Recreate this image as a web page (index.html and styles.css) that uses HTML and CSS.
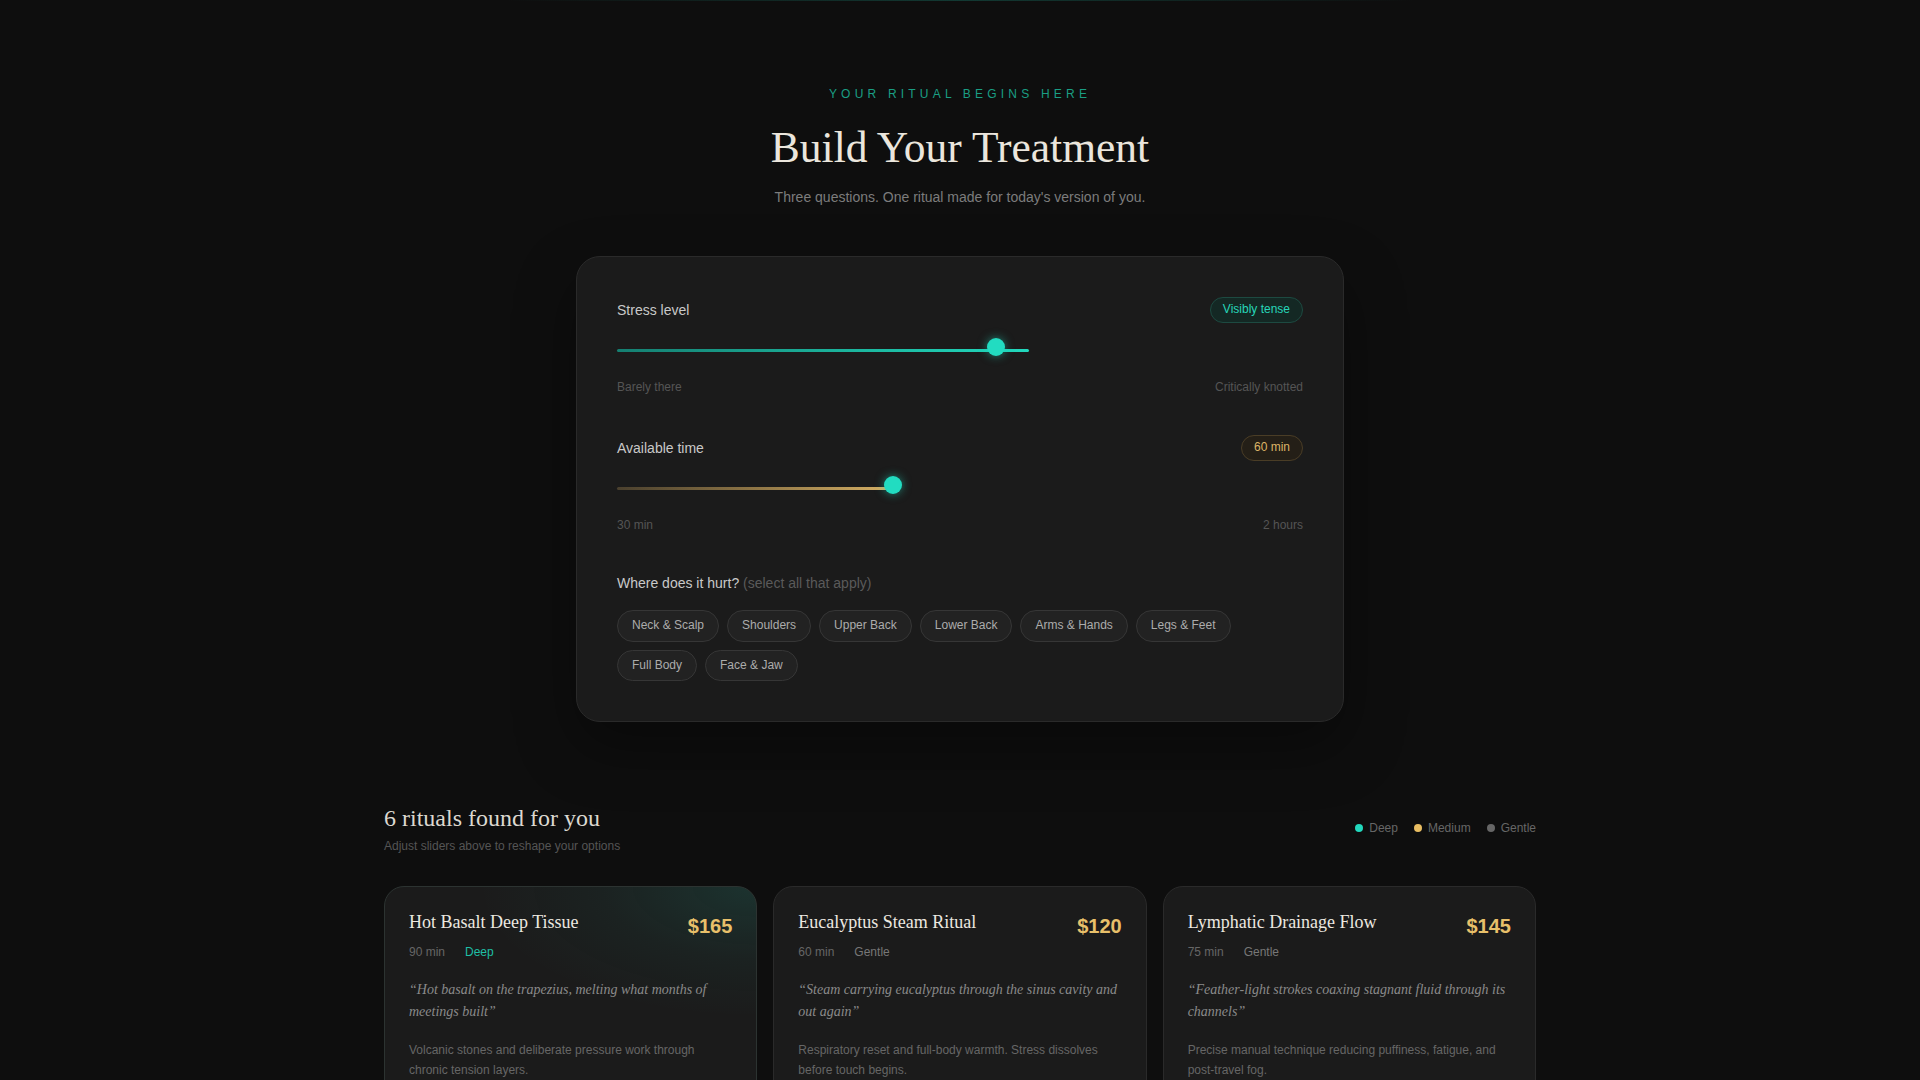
FILE: index.html
```html
<!DOCTYPE html>
<html lang="en">
<head>
<meta charset="utf-8">
<title>Build Your Treatment</title>
<link rel="stylesheet" href="styles.css">
</head>
<body>
<div class="topline"></div>
<main class="page">
  <header class="hero">
    <p class="eyebrow">YOUR RITUAL BEGINS HERE</p>
    <h1 class="hero-title">Build Your Treatment</h1>
    <p class="lede">Three questions. One ritual made for today's version of you.</p>
  </header>

  <section class="builder">
    <div class="field">
      <div class="field-head">
        <span class="field-label">Stress level</span>
        <span class="badge badge-teal">Visibly tense</span>
      </div>
      <div class="slider">
        <div class="track track-stress"></div>
        <div class="thumb" style="left: 55.3%"></div>
      </div>
      <div class="scale"><span>Barely there</span><span>Critically knotted</span></div>
    </div>

    <div class="field">
      <div class="field-head">
        <span class="field-label">Available time</span>
        <span class="badge badge-gold">60 min</span>
      </div>
      <div class="slider">
        <div class="track track-time" style="width: 40.3%"></div>
        <div class="thumb" style="left: 40.3%"></div>
      </div>
      <div class="scale"><span>30 min</span><span>2 hours</span></div>
    </div>

    <div class="field">
      <p class="question">Where does it hurt? <span class="hint">(select all that apply)</span></p>
      <div class="chips">
        <span class="chip">Neck &amp; Scalp</span>
        <span class="chip">Shoulders</span>
        <span class="chip">Upper Back</span>
        <span class="chip">Lower Back</span>
        <span class="chip">Arms &amp; Hands</span>
        <span class="chip">Legs &amp; Feet</span>
        <span class="chip">Full Body</span>
        <span class="chip">Face &amp; Jaw</span>
      </div>
    </div>
  </section>

  <section class="results">
    <div class="results-head">
      <div>
        <h2 class="results-title">6 rituals found for you</h2>
        <p class="results-sub">Adjust sliders above to reshape your options</p>
      </div>
      <div class="legend">
        <span class="legend-item"><span class="dot dot-deep"></span>Deep</span>
        <span class="legend-item"><span class="dot dot-medium"></span>Medium</span>
        <span class="legend-item"><span class="dot dot-gentle"></span>Gentle</span>
      </div>
    </div>

    <div class="grid">
      <article class="ritual ritual-featured">
        <div class="ritual-head">
          <div>
            <h3 class="ritual-title">Hot Basalt Deep Tissue</h3>
            <div class="meta"><span>90 min</span><span class="lvl-deep">Deep</span></div>
          </div>
          <span class="price">$165</span>
        </div>
        <p class="quote">“Hot basalt on the trapezius, melting what months of meetings built”</p>
        <p class="desc">Volcanic stones and deliberate pressure work through chronic tension layers.</p>
      </article>

      <article class="ritual">
        <div class="ritual-head">
          <div>
            <h3 class="ritual-title">Eucalyptus Steam Ritual</h3>
            <div class="meta"><span>60 min</span><span class="lvl-gentle">Gentle</span></div>
          </div>
          <span class="price">$120</span>
        </div>
        <p class="quote">“Steam carrying eucalyptus through the sinus cavity and out again”</p>
        <p class="desc">Respiratory reset and full-body warmth. Stress dissolves before touch begins.</p>
      </article>

      <article class="ritual">
        <div class="ritual-head">
          <div>
            <h3 class="ritual-title">Lymphatic Drainage Flow</h3>
            <div class="meta"><span>75 min</span><span class="lvl-gentle">Gentle</span></div>
          </div>
          <span class="price">$145</span>
        </div>
        <p class="quote">“Feather-light strokes coaxing stagnant fluid through its channels”</p>
        <p class="desc">Precise manual technique reducing puffiness, fatigue, and post-travel fog.</p>
      </article>

      <article class="ritual">
        <div class="ritual-head">
          <div>
            <h3 class="ritual-title">Shiatsu Pressure Map</h3>
            <div class="meta"><span>60 min</span><span class="lvl-medium">Medium</span></div>
          </div>
          <span class="price">$130</span>
        </div>
        <p class="quote">“Thumbs finding the exact point where the day got stuck”</p>
        <p class="desc">Meridian-based pressure sequence to release shoulders and lower back.</p>
      </article>

      <article class="ritual">
        <div class="ritual-head">
          <div>
            <h3 class="ritual-title">Cedar Scalp &amp; Neck Release</h3>
            <div class="meta"><span>45 min</span><span class="lvl-medium">Medium</span></div>
          </div>
          <span class="price">$95</span>
        </div>
        <p class="quote">“Warm cedar oil undoing the knot behind your left ear”</p>
        <p class="desc">Focused upper-body work for screen-bound necks and clenched jaws.</p>
      </article>

      <article class="ritual">
        <div class="ritual-head">
          <div>
            <h3 class="ritual-title">Full Body Reset</h3>
            <div class="meta"><span>120 min</span><span class="lvl-deep">Deep</span></div>
          </div>
          <span class="price">$210</span>
        </div>
        <p class="quote">“Two hours where nothing is asked of you”</p>
        <p class="desc">Head-to-toe restoration combining stones, stretching and steam.</p>
      </article>
    </div>
  </section>
</main>
</body>
</html>
```

FILE: styles.css
```css
* { box-sizing: border-box; }

html, body {
  margin: 0;
  background: #0e0e0e;
}

body {
  font-family: "Liberation Sans", Arial, sans-serif;
  color: #cfcfcf;
  position: relative;
}

.topline {
  position: absolute;
  top: 0;
  left: 50%;
  width: 912px;
  height: 1px;
  transform: translateX(-50%);
  background: linear-gradient(90deg, rgba(31, 209, 181, 0) 0%, rgba(31, 209, 181, 0.22) 50%, rgba(31, 209, 181, 0) 100%);
}

.page {
  width: 1152px;
  margin: 0 auto;
  padding: 85px 0 80px;
}

/* Hero */
.hero {
  text-align: center;
}

.eyebrow {
  margin: 0;
  font-size: 12px;
  line-height: 18px;
  letter-spacing: 0.35em;
  color: #1a9e84;
}

.hero-title {
  margin: 19px 0 0;
  font-family: "Liberation Serif", "Times New Roman", serif;
  font-weight: 400;
  font-size: 43.5px;
  line-height: 51px;
  color: #ebe6dd;
}

.lede {
  margin: 13px 0 0;
  font-size: 14px;
  line-height: 22.4px;
  color: #7c7c7c;
}

/* Builder card */
.builder {
  width: 768px;
  margin: 48px auto 0;
  padding: 40px;
  background: #1b1b1b;
  border: 1px solid #2a2a2a;
  border-radius: 24px;
  box-shadow: 0 24px 60px rgba(0, 0, 0, 0.35);
}

.field + .field {
  margin-top: 41.5px;
}

.field-head {
  display: flex;
  justify-content: space-between;
  align-items: center;
}

.field-label {
  font-size: 14px;
  color: #c9c9c9;
}

.badge {
  font-size: 12px;
  line-height: 13.4px;
  padding: 5px 12px;
  border-radius: 999px;
  border: 1px solid;
}

.badge-teal {
  color: #27d6b9;
  background: #142824;
  border-color: #1d4a41;
}

.badge-gold {
  color: #dcb467;
  background: #241f17;
  border-color: #4a3d26;
}

.slider {
  position: relative;
  height: 24px;
  margin-top: 12px;
}

.track {
  position: absolute;
  left: 0;
  top: 14px;
  height: 3px;
  border-radius: 2px;
}

.track-stress {
  width: 60%;
  background: linear-gradient(90deg, #157f71 0%, #1cb8a0 60%, #22d8bd 100%);
}

.track-time {
  background: linear-gradient(90deg, #4a402e 0%, #8f7646 50%, #d6b065 100%);
}

.thumb {
  position: absolute;
  top: 3px;
  width: 18px;
  height: 18px;
  margin-left: -9px;
  border-radius: 50%;
  background: #22dcc1;
  box-shadow: 0 0 10px rgba(34, 220, 193, 0.55);
}

.scale {
  display: flex;
  justify-content: space-between;
  margin-top: 21px;
  font-size: 12px;
  line-height: 14px;
  color: #555555;
}

.question {
  margin: 0;
  font-size: 14px;
  line-height: 20px;
  color: #c9c9c9;
}

.hint {
  color: #5a5a5a;
}

.chips {
  display: flex;
  flex-wrap: wrap;
  gap: 8px;
  margin-top: 17px;
}

.chip {
  font-size: 12px;
  line-height: 13.5px;
  padding: 8px 14px;
  border-radius: 999px;
  background: #222222;
  border: 1px solid #363636;
  color: #acacac;
}

/* Results */
.results {
  margin-top: 81.5px;
}

.results-head {
  display: flex;
  justify-content: space-between;
  align-items: center;
}

.results-title {
  margin: 0;
  font-family: "Liberation Serif", "Times New Roman", serif;
  font-weight: 400;
  font-size: 24px;
  line-height: 28.8px;
  color: #dcd8d0;
}

.results-sub {
  margin: 4px 0 0;
  font-size: 12px;
  line-height: 18px;
  color: #555555;
}

.legend {
  display: flex;
  gap: 16px;
  font-size: 12px;
  color: #666666;
  margin-top: -2px;
}

.legend-item {
  display: flex;
  align-items: center;
  gap: 6px;
}

.dot {
  width: 8px;
  height: 8px;
  border-radius: 50%;
}

.dot-deep { background: #22d8bd; }
.dot-medium { background: #e8bd62; }
.dot-gentle { background: #666666; }

.grid {
  display: grid;
  grid-template-columns: repeat(3, 1fr);
  gap: 16px;
  margin-top: 31px;
}

.ritual {
  padding: 24px;
  background: #1b1b1b;
  border: 1px solid #2a2a2a;
  border-radius: 20px;
}

.ritual-featured {
  background: radial-gradient(ellipse 75% 60% at 100% 0%, rgba(31, 209, 181, 0.13) 0%, rgba(31, 209, 181, 0.04) 55%, rgba(31, 209, 181, 0) 100%), #1b1b1b;
  border-color: #2c3331;
}

.ritual-head {
  display: flex;
  justify-content: space-between;
  align-items: flex-start;
  gap: 12px;
}

.ritual-title {
  margin: 0;
  font-family: "Liberation Serif", "Times New Roman", serif;
  font-weight: 400;
  font-size: 18px;
  line-height: 23.4px;
  color: #ece8e0;
}

.meta {
  display: flex;
  gap: 20px;
  margin-top: 9px;
  font-size: 12px;
  line-height: 18px;
  color: #666666;
}

.lvl-deep { color: #1fbfa5; }
.lvl-medium { color: #d6ad5c; }
.lvl-gentle { color: #777777; }

.price {
  font-size: 20px;
  line-height: 30px;
  font-weight: 700;
  color: #e8c06a;
}

.quote {
  margin: 18px 0 0;
  font-family: "Liberation Serif", "Times New Roman", serif;
  font-style: italic;
  font-size: 14px;
  line-height: 22.4px;
  color: #8a8a8a;
}

.desc {
  margin: 16px 0 0;
  font-size: 12px;
  line-height: 20px;
  color: #666666;
}
```
